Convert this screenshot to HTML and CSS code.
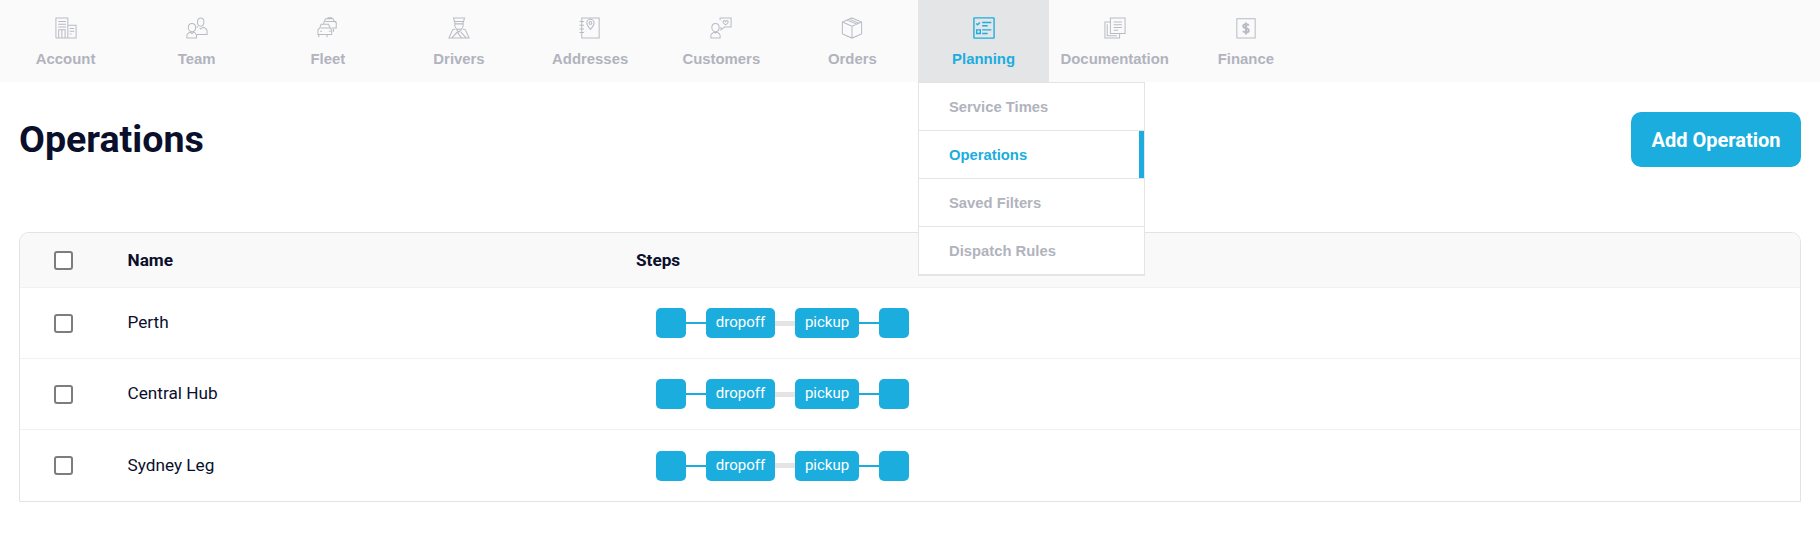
FILE: index.html
```html
<!DOCTYPE html>
<html lang="en">
<head>
<meta charset="utf-8">
<title>Operations</title>
<link rel="stylesheet" href="styles.css">
</head>
<body>
<nav class="nav">
  <a class="nav-item">
    <svg class="ico" viewBox="0 0 24 24"><path d="M1 23V1h13v22M14 9h9v14H1M3.500 5h8.500M3.500 8h8.500M3.500 11h8.500M4 23v-9h7v9M7.500 14v9M16 12.500h5M16 15.500h5M16 18.500h2"/></svg>
    <span>Account</span>
  </a>
  <a class="nav-item">
    <svg class="ico" viewBox="0 0 24 24"><path d="M6.500 7c2.500 0 4 2 4 4.500S8.800 16 6.500 16 2.500 14 2.500 11.500 4 7 6.500 7zM1 23v-3c0-2 2-2.500 3.500-3.500l2 1.500 2-1.500c1.500 1 3 1.500 3 3.500v3zM16 1c2 0 3.500 2 3.500 4.500S18 10 16 10s-3.500-2-3.500-4.500S14 1 16 1zM13 10.500l-1.500 1M12 19h11v-4c0-2-2-2.500-4-4l-3 2-1-.7"/></svg>
    <span>Team</span>
  </a>
  <a class="nav-item">
    <svg class="ico" viewBox="0 0 24 24"><path d="M2 22v-3M11 22v-3M1 19v-5l2-2 1.500-4h8l2 4 1.500 2v5zM4 12h11M3.500 15.500h2M13 15.500h2M7 8l1-3.500 1.500-2.500h8l1.500 3 2 1v6h-5M9 5h12M12 2V.8h4V2M18 13v3"/></svg>
    <span>Fleet</span>
  </a>
  <a class="nav-item">
    <svg class="ico" viewBox="0 0 24 24"><path d="M6 1h12l-1 4H7zM7 5h10M7.500 5v4c0 2.500 2 4.500 4.500 4.500s4.500-2 4.500-4.500V5M8 7.500h8M8 13l-3 1-4 9h22l-4-9-3-1M9 13.500l3 3 3-3M4 23l6-6.500 5 6.500M20 23l-6-6.500"/></svg>
    <span>Drivers</span>
  </a>
  <a class="nav-item">
    <svg class="ico" viewBox="0 0 24 24"><path d="M3 1h19v22H3zM0.500 5h5M0.500 9h5M0.500 13h5M0.500 17h5M12.500 13.500c-2.500-3-4-4.500-4-7a4 4 0 0 1 8 0c0 2.500-1.500 4-4 7zM12.500 5a1.500 1.500 0 1 0 .01 0z"/></svg>
    <span>Addresses</span>
  </a>
  <a class="nav-item">
    <svg class="ico" viewBox="0 0 24 24"><path d="M6 7c2.500 0 4 2 4 4.500S8.500 16 6 16s-4-2-4-4.500S3.500 7 6 7zM1 23v-3c0-2 2-2.500 3.500-3.500l1.500 1 1.500-1c1.500 1 3.500 1.500 3.500 3.500v3zM11 3.500V1h12v10h-7l-4 3v-3M14.500 4.500c1-1 2-.5 2.500.5.500-1 1.500-1.500 2.500-.5s0 2.500-2.500 4c-2.500-1.500-3.500-3-2.500-4z"/></svg>
    <span>Customers</span>
  </a>
  <a class="nav-item">
    <svg class="ico" viewBox="0 0 24 24"><path d="M12 1l10.500 4.500v13L12 23 1.500 18.500v-13zM1.500 5.500L12 10l10.500-4.500M12 10v13M6.500 3.200L17 7.800M9 2.300L19.500 6.800"/></svg>
    <span>Orders</span>
  </a>
  <a class="nav-item is-active">
    <svg class="ico ico-strong" viewBox="0 0 24 24"><path d="M1.500 1h21a.500.500 0 0 1 .500.500v21a.500.500 0 0 1-.500.500h-21a.500.500 0 0 1-.500-.500v-21a.500.500 0 0 1 .500-.500zM3.500 7l1.500 1.500 2.500-2.500M10 6h10M10 9.500h6M4 14h4v4H4zM10 14h10M10 18h6"/></svg>
    <span>Planning</span>
  </a>
  <a class="nav-item">
    <svg class="ico" viewBox="0 0 24 24"><path d="M7 1h16v17H7zM7 5.500H1V23h16v-5M10.500 5.500h9M10.500 8.500h9M10.500 11.500h9M10.500 14.500h5M3.500 8v12.500H14"/></svg>
    <span>Documentation</span>
  </a>
  <a class="nav-item">
    <svg class="ico" viewBox="0 0 24 24"><path d="M2 2h20v21H2z"/><path class="ico-bold" d="M15 9.500c-.4-1-1.500-1.700-3-1.700-1.800 0-3 .9-3 2.200 0 3 6 1.700 6 4.700 0 1.300-1.200 2.200-3 2.200-1.500 0-2.700-.7-3.100-1.900M12 6v13"/></svg>
    <span>Finance</span>
  </a>
</nav>

<ul class="menu">
  <li class="menu-item">Service Times</li>
  <li class="menu-item is-current">Operations</li>
  <li class="menu-item">Saved Filters</li>
  <li class="menu-item">Dispatch Rules</li>
</ul>

<main class="main">
  <header class="head">
    <h1 class="title">Operations</h1>
    <button class="btn">Add Operation</button>
  </header>
  <section class="table">
    <div class="row row-head">
      <span class="cell-check"><i class="check"></i></span>
      <span class="cell-name">Name</span>
      <span>Steps</span>
    </div>
    <div class="row">
      <span class="cell-check"><i class="check"></i></span>
      <span class="cell-name">Perth</span>
      <div class="steps"><b class="node"></b><i class="link"></i><b class="node node-drop">dropoff</b><i class="link link-gray"></i><b class="node node-pick">pickup</b><i class="link"></i><b class="node"></b></div>
    </div>
    <div class="row">
      <span class="cell-check"><i class="check"></i></span>
      <span class="cell-name">Central Hub</span>
      <div class="steps"><b class="node"></b><i class="link"></i><b class="node node-drop">dropoff</b><i class="link link-gray"></i><b class="node node-pick">pickup</b><i class="link"></i><b class="node"></b></div>
    </div>
    <div class="row">
      <span class="cell-check"><i class="check"></i></span>
      <span class="cell-name">Sydney Leg</span>
      <div class="steps"><b class="node"></b><i class="link"></i><b class="node node-drop">dropoff</b><i class="link link-gray"></i><b class="node node-pick">pickup</b><i class="link"></i><b class="node"></b></div>
    </div>
  </section>
</main>
</body>
</html>
```
FILE: styles.css
```css
* { box-sizing: border-box; }
html, body { margin: 0; padding: 0; }
body {
  position: relative;
  width: 1820px;
  height: 536px;
  overflow: hidden;
  background: #fff;
  font-family: Roboto, sans-serif;
  color: #0a0f2c;
}
.nav {
  display: flex;
  height: 82px;
  background: #fafafb;
}
.nav-item {
  width: 131.150px;
  padding-top: 17px;
  display: flex;
  flex-direction: column;
  align-items: center;
  gap: 11px;
  color: #b1b3bd;
  font: 700 14.900px/18px "Liberation Sans", sans-serif;
  white-space: nowrap;
}
.ico {
  width: 22px;
  height: 22px;
  fill: none;
  stroke: #b9bbc4;
  stroke-width: 1.100;
}
.ico-bold { stroke-width: 2.200; }
.ico-strong { stroke-width: 1.500; }
.is-active {
  background: #e4e5e7;
  color: #1badde;
}
.is-active .ico { stroke: #1badde; }
.menu {
  position: absolute;
  left: 918px;
  top: 82px;
  width: 227px;
  height: 194px;
  margin: 0;
  padding: 0;
  list-style: none;
  background: #fff;
  border: 1px solid #e4e4e6;
  border-bottom-width: 2px;
  z-index: 2;
}
.menu-item {
  height: 48px;
  padding-left: 30px;
  display: flex;
  align-items: center;
  color: #b1b3bd;
  font: 700 14.800px/18px "Liberation Sans", sans-serif;
  border-bottom: 1px solid #e4e4e6;
}
.menu-item:last-child { border-bottom: 0; height: 47px; }
.is-current {
  color: #1badde;
  box-shadow: inset -5px 0 0 #1badde;
}
.main { padding: 30px 19px 0; }
.head {
  display: flex;
  justify-content: space-between;
  align-items: flex-start;
  height: 120px;
}
.title {
  margin: 0;
  font: 700 37.600px/55px Roboto, sans-serif;
  color: #0a0f2c;
}
.btn {
  width: 170px;
  height: 55px;
  border: 0;
  border-radius: 10px;
  background: #1badde;
  color: #fff;
  font: 700 20px/24px Roboto, sans-serif;
}
.table {
  height: 270px;
  border: 1px solid #e3e3e3;
  border-top-left-radius: 10px;
  border-top-right-radius: 10px;
  overflow: hidden;
}
.row {
  display: flex;
  align-items: center;
  height: 71px;
  font-size: 17.200px;
  border-bottom: 1px solid #f1f1f1;
}
.row:last-child { border-bottom: 0; }
.row-head {
  height: 55px;
  background: #f9f9f9;
  font-weight: 700;
}
.cell-check { width: 107.500px; padding-left: 34px; display: flex; }
.cell-name { width: 508.500px; padding-bottom: 2px; }
.row-head .cell-name { padding-bottom: 0; }
.check {
  width: 19px;
  height: 19px;
  border: 2px solid #7d7d7d;
  border-radius: 3px;
  background: #fff;
}
.steps {
  display: flex;
  align-items: center;
  margin-left: 20px;
}
.node {
  display: flex;
  align-items: center;
  justify-content: center;
  width: 30px;
  height: 30px;
  padding-bottom: 2px;
  border-radius: 5px;
  background: #1badde;
  color: #fff;
  font: 400 15px/18px Roboto, sans-serif;
}
.node-drop { width: 69px; }
.node-pick { width: 64px; }
.link { width: 20px; height: 2px; background: #1badde; }
.link-gray { height: 5px; background: #e4e4e4; }
```
